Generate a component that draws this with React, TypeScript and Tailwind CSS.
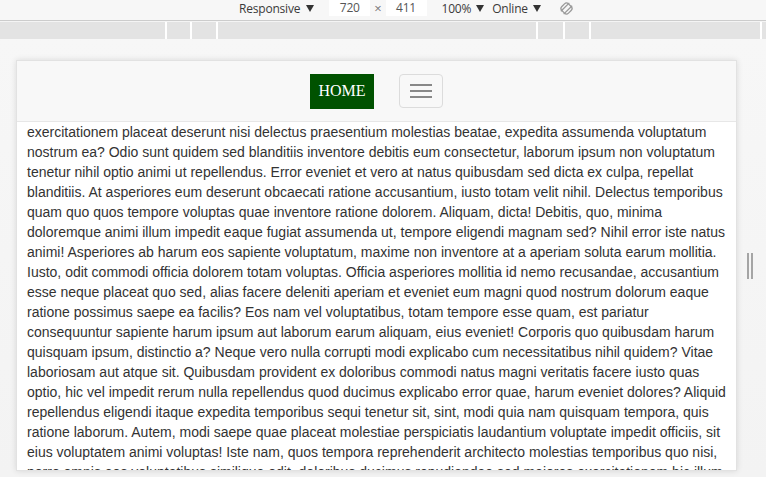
const lines = [
  "exercitationem placeat deserunt nisi delectus praesentium molestias beatae, expedita assumenda voluptatum",
  "nostrum ea? Odio sunt quidem sed blanditiis inventore debitis eum consectetur, laborum ipsum non voluptatum",
  "tenetur nihil optio animi ut repellendus. Error eveniet et vero at natus quibusdam sed dicta ex culpa, repellat",
  "blanditiis. At asperiores eum deserunt obcaecati ratione accusantium, iusto totam velit nihil. Delectus temporibus",
  "quam quo quos tempore voluptas quae inventore ratione dolorem. Aliquam, dicta! Debitis, quo, minima",
  "doloremque animi illum impedit eaque fugiat assumenda ut, tempore eligendi magnam sed? Nihil error iste natus",
  "animi! Asperiores ab harum eos sapiente voluptatum, maxime non inventore at a aperiam soluta earum mollitia.",
  "Iusto, odit commodi officia dolorem totam voluptas. Officia asperiores mollitia id nemo recusandae, accusantium",
  "esse neque placeat quo sed, alias facere deleniti aperiam et eveniet eum magni quod nostrum dolorum eaque",
  "ratione possimus saepe ea facilis? Eos nam vel voluptatibus, totam tempore esse quam, est pariatur",
  "consequuntur sapiente harum ipsum aut laborum earum aliquam, eius eveniet! Corporis quo quibusdam harum",
  "quisquam ipsum, distinctio a? Neque vero nulla corrupti modi explicabo cum necessitatibus nihil quidem? Vitae",
  "laboriosam aut atque sit. Quibusdam provident ex doloribus commodi natus magni veritatis facere iusto quas",
  "optio, hic vel impedit rerum nulla repellendus quod ducimus explicabo error quae, harum eveniet dolores? Aliquid",
  "repellendus eligendi itaque expedita temporibus sequi tenetur sit, sint, modi quia nam quisquam tempora, quis",
  "ratione laborum. Autem, modi saepe quae placeat molestiae perspiciatis laudantium voluptate impedit officiis, sit",
  "eius voluptatem animi voluptas! Iste nam, quos tempora reprehenderit architecto molestias temporibus quo nisi,",
  "porro omnis eos voluptatibus similique odit, doloribus ducimus repudiandae sed maiores exercitationem hic illum",
];

// little filled triangle used by the devtools dropdowns
function Caret() {
  return (
    <svg width="8" height="7" viewBox="0 0 8 7" className="-mt-[3px]">
      <path d="M0 0 L8 0 L4 7 Z" fill="#333" />
    </svg>
  );
}

function Toolbar() {
  return (
    <div className="h-[21px] flex items-center pl-[239px] text-[12px] text-[#3a3a3a] bg-[#f7f7f7] border-b border-[#cccccc] font-['Open_Sans',sans-serif] tracking-[-0.2px]">
      <span className="-mt-[3px]">Responsive</span>
      <span className="ml-[6px]"><Caret /></span>
      <div className="ml-[15px] w-[41px] h-[16px] -mt-[5px] bg-white text-[#555] text-center leading-[16px]">720</div>
      <span className="ml-[4px] -mt-[2px] text-[#777] text-[13px]">×</span>
      <div className="ml-[4px] w-[41px] h-[16px] -mt-[5px] bg-white text-[#555] text-center leading-[16px]">411</div>
      <span className="ml-[15px] -mt-[3px]">100%</span>
      <span className="ml-[5px]"><Caret /></span>
      <span className="ml-[8px] -mt-[3px]">Online</span>
      <span className="ml-[5px]"><Caret /></span>
      <div className="ml-[18px] -mt-[4px]">
        <svg width="15" height="15" viewBox="0 0 16 16" fill="none" stroke="#9a9a9a" strokeWidth="1.4">
          <rect x="3" y="3" width="10" height="10" rx="3" transform="rotate(-45 8 8)" />
          <line x1="2" y1="11" x2="11" y2="2" />
          <line x1="5" y1="14" x2="14" y2="5" />
        </svg>
      </div>
    </div>
  );
}

function Ruler() {
  const segs = [165, 23, 24, 318, 25, 24, 169];
  return (
    <div className="mt-[1px] h-[17px] flex bg-white">
      {segs.map((w, i) => (
        <div key={i} className="h-full bg-[#e3e3e3] mr-[2px]" style={{ width: w }} />
      ))}
      <div className="h-full flex-1 bg-[#e3e3e3]" />
    </div>
  );
}

function Navbar() {
  return (
    <div className="h-[61px] shrink-0 bg-[#f8f8f8] border-b border-[#e7e7e7] flex items-center justify-center gap-[25px]">
      <div className="w-[64px] h-[35px] bg-[#005200] text-white flex items-center justify-center font-['Liberation_Serif',serif] text-[16px]">
        HOME
      </div>
      <div className="w-[44px] h-[34px] border border-[#dcdcdc] rounded-[4px] flex flex-col items-center justify-center gap-[4px]">
        <span className="block w-[22px] h-[2px] bg-[#888]" />
        <span className="block w-[22px] h-[2px] bg-[#888]" />
        <span className="block w-[22px] h-[2px] bg-[#888]" />
      </div>
    </div>
  );
}

export default function App() {
  return (
    <div className="w-[766px] h-[477px] overflow-hidden bg-[#f4f4f4] flex flex-col">
      <Toolbar />
      <Ruler />
      <div className="flex-1 flex pt-[21px] bg-gradient-to-b from-[#f7f7f7] to-[#f3f3f3]">
        <div className="w-[16px] shrink-0" />
        <div className="w-[721px] h-[411px] shrink-0 bg-white border border-[#e2e2e2] shadow-[0_0_6px_rgba(0,0,0,0.12)] flex flex-col overflow-hidden">
          <Navbar />
          <div className="pl-[10px] text-[14px] leading-[20px] text-[#333] font-['Liberation_Sans',Arial,sans-serif] whitespace-nowrap">
            {lines.map((l, i) => (
              <div key={i}>{l}</div>
            ))}
          </div>
        </div>
        <div className="flex-1 flex justify-center pr-[4px]">
          <div className="mt-[193px] flex gap-[2px] h-[26px]">
            <span className="w-[2px] h-full bg-[#a5a5a5]" />
            <span className="w-[2px] h-full bg-[#a5a5a5]" />
          </div>
        </div>
      </div>
    </div>
  );
}
